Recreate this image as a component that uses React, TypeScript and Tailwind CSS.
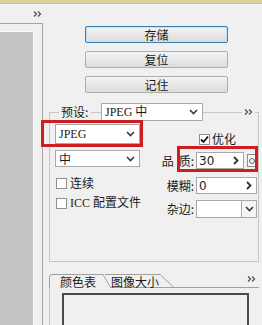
import React from 'react';

function ChevronDown() {
  return (
    <svg width="9" height="6" viewBox="0 0 9 6" fill="none" stroke="#3a3a3a" strokeWidth="1.6">
      <polyline points="1 1 4.5 4.5 8 1" />
    </svg>
  );
}

function ChevronRight() {
  return (
    <svg width="6" height="9" viewBox="0 0 6 9" fill="none" stroke="#333" strokeWidth="1.8">
      <polyline points="1 1 4.5 4.5 1 8" />
    </svg>
  );
}

function DoubleChevron() {
  return (
    <svg width="9" height="6" viewBox="0 0 9 6" fill="none" stroke="#555" strokeWidth="1.3">
      <polyline points="1 0.5 3.5 3 1 5.5" />
      <polyline points="5 0.5 7.5 3 5 5.5" />
    </svg>
  );
}

interface ButtonProps {
  label: string;
  focused?: boolean;
}

function Button({ label, focused }: ButtonProps) {
  return (
    <div
      className={`h-[17px] flex items-center justify-center rounded-[2px] border text-[12px] leading-none bg-linear-to-b from-[#f4f4f4] to-[#dcdcdc] ${
        focused ? 'border-[#3c7fb1] shadow-[inset_0_0_0_1px_#bfe3f5]' : 'border-[#acacac]'
      }`}
    >
      {label}
    </div>
  );
}

interface SelectProps {
  label: string;
  className?: string;
  textClass?: string;
}

function Select({ label, className, textClass }: SelectProps) {
  return (
    <div className={`flex items-stretch bg-white border border-[#a9a9a9] ${className ?? ''}`}>
      <div className={`flex-1 flex items-center pl-[3px] text-[12px] leading-none ${textClass ?? ''}`}>{label}</div>
      <div className="w-[17px] flex items-center justify-center">
        <ChevronDown />
      </div>
    </div>
  );
}

function Checkbox({ checked }: { checked?: boolean }) {
  return (
    <div className="w-[11px] h-[11px] shrink-0 border border-[#8e8f8f] bg-white flex items-center justify-center">
      {checked && (
        <svg width="9" height="9" viewBox="0 0 9 9" fill="none" stroke="#111" strokeWidth="1.8">
          <polyline points="1 4.5 3.5 7 8 1.5" />
        </svg>
      )}
    </div>
  );
}

function Spinner({ value, className }: { value: string; className?: string }) {
  return (
    <div className={`h-[17px] flex items-center justify-between bg-white border border-[#a9a9a9] pl-[2px] pr-[4px] ${className ?? ''}`}>
      <span className="text-[12px] leading-none font-['DejaVu_Sans',sans-serif]">{value}</span>
      <ChevronRight />
    </div>
  );
}

const serif = "font-['Liberation_Serif','Noto_Sans_CJK_SC',serif]";

export default function App() {
  return (
    <div className="w-[262px] h-[325px] bg-[#f0f0f0] overflow-hidden flex flex-col relative text-[#1b1b1b] font-['Noto_Sans_CJK_SC',sans-serif]">
      <div className="h-[4px] shrink-0 bg-[#d9cf98] border-b border-[#cbc4a4]" />

      <div className="flex flex-1 min-h-0">
        {/* left preview pane */}
        <div className="w-[43px] shrink-0 flex flex-col">
          <div className="h-[19px] flex items-center justify-end pr-[1px]">
            <DoubleChevron />
          </div>
          <div className="flex-1 border-t border-r border-[#a3a3a3] pt-[7px] pr-[8px]">
            <div className="h-full bg-[#c5c5c5] border-t border-r border-[#fbfbfb]" />
          </div>
        </div>

        {/* settings */}
        <div className="flex-1 flex flex-col pl-[6px] pr-[3px]">
          <div className="pt-[22px] pl-[36px] pr-[31px] flex flex-col gap-[8px]">
            <Button label="存储" focused />
            <Button label="复位" />
            <Button label="记住" />
          </div>

          {/* preset group header */}
          <div className="mt-[10px] h-[18px] flex items-center">
            <div className="w-[10px] h-[9px] self-end border-l border-t border-[#c6c6c6]" />
            <span className="w-[32px] pl-[2px] text-[12px] leading-none">预设:</span>
            <div className="w-[10px] h-px bg-[#c6c6c6]" />
            <Select label="JPEG 中" className="w-[102px] h-[18px]" textClass={serif} />
            <div className="flex-1 h-px bg-[#c6c6c6]" />
            <div className="px-[2px] flex items-center">
              <DoubleChevron />
            </div>
            <div className="w-[4px] h-[9px] self-end border-r border-t border-[#c6c6c6]" />
          </div>

          {/* preset group body */}
          <div className="h-[141px] border-l border-r border-b border-[#c6c6c6] flex">
            <div className="w-[92px] pl-[5px] pt-[3px] flex flex-col">
              <Select label="JPEG" className="w-[85px] h-[20px]" textClass={serif} />
              <Select label="中" className="w-[85px] h-[17px] mt-[6px]" />
              <div className="mt-[10px] flex items-center gap-[3px] pl-[1px]">
                <Checkbox />
                <span className="text-[12px] leading-none">连续</span>
              </div>
              <div className="mt-[8px] flex items-center gap-[3px] pl-[1px]">
                <Checkbox />
                <span className={`text-[12px] leading-none ${serif}`}>ICC 配置文件</span>
              </div>
            </div>

            <div className="flex-1 pt-[12px] flex flex-col">
              <div className="flex items-center gap-[2px] pl-[57px]">
                <Checkbox checked />
                <span className="text-[12px] leading-none">优化</span>
              </div>
              <div className="mt-[7px] flex items-center">
                <span className="w-[54px] flex justify-end pr-[2px] text-[12px] leading-none">
                  <span>品</span>
                  <span className="ml-[5px]">质:</span>
                </span>
                <Spinner value="30" className="w-[48px]" />
                <div className="ml-[3px] w-[10px] h-[13px] border border-[#8e8f8f] bg-[#f7f7f7] flex items-center justify-center">
                  <div className="w-[6px] h-[6px] rounded-full border border-[#666]" />
                </div>
              </div>
              <div className="mt-[8px] flex items-center">
                <span className="w-[54px] text-right pr-[2px] text-[12px] leading-none">模糊:</span>
                <Spinner value="0" className="w-[61px]" />
              </div>
              <div className="mt-[6px] flex items-center">
                <span className="w-[54px] text-right pr-[2px] text-[12px] leading-none">杂边:</span>
                <div className="w-[46px] h-[18px] bg-white border border-[#a9a9a9]" />
                <div className="w-[15px] h-[18px] border border-l-0 border-[#a9a9a9] bg-[#f4f4f4] flex items-center justify-center">
                  <ChevronDown />
                </div>
              </div>
            </div>
          </div>

          {/* tabs */}
          <div className="mt-[12px] h-[14px] flex items-end relative">
            <svg className="absolute inset-0" width="210" height="14" viewBox="0 0 210 14" fill="none" stroke="#a0a0a0" strokeWidth="1">
              <path d="M0.5 14 V3 Q0.5 0.5 3 0.5 H54 L61.5 13.5" />
              <path d="M56 0.5 H111 L125 13.5" />
              <path d="M61 13.5 H210" />
            </svg>
            <span className="relative ml-[11px] text-[12px] leading-[13px]">颜色表</span>
            <span className="relative ml-[15px] text-[12px] leading-[13px]">图像大小</span>
            <div className="relative ml-auto mr-[3px] mb-[6px]">
              <DoubleChevron />
            </div>
          </div>

          <div className="flex-1 border-l border-[#c6c6c6] pl-[12px] pr-[10px] pt-[5px]">
            <div className="h-full border-2 border-b-0 border-[#4a4a4a] bg-[#f0f0f0]" />
          </div>
        </div>
      </div>

      {/* red highlight boxes */}
      <div className="absolute left-[41px] top-[120px] w-[102px] h-[27px] border-[3px] border-[#cc1f22]" />
      <div className="absolute left-[177px] top-[146px] w-[81px] h-[26px] border-[3px] border-[#cc1f22]" />
    </div>
  );
}
